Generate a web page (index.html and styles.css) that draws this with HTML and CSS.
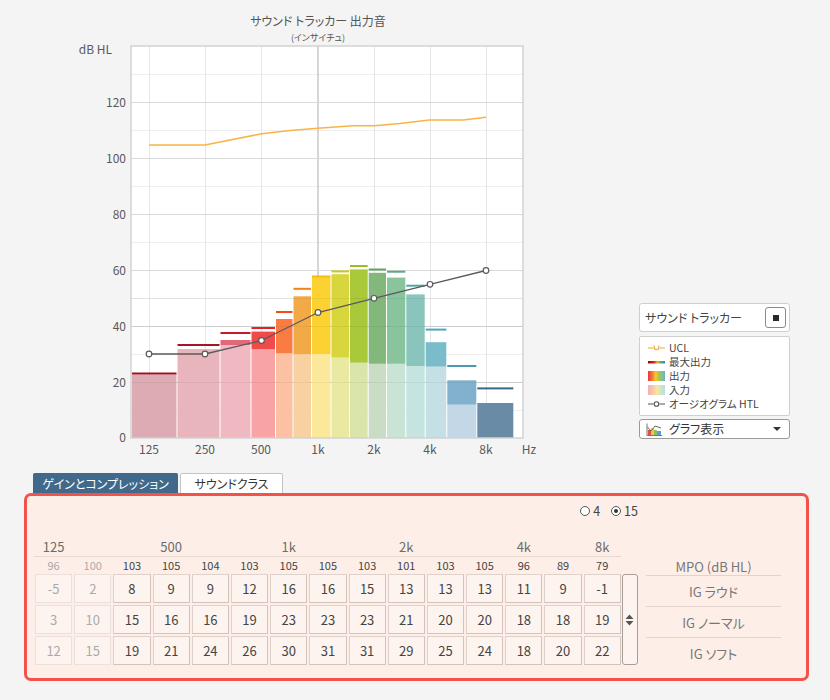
FILE: index.html
```html
<!DOCTYPE html>
<html lang="ja">
<head>
<meta charset="utf-8">
<title>サウンド トラッカー</title>
<link rel="stylesheet" href="styles.css">
</head>
<body>
<div class="page">
  <div class="top">
    <svg class="chart" width="560" height="473" viewBox="0 0 560 473">
      <text class="title" x="318" y="26" text-anchor="middle">サウンド トラッカー 出力音</text>
      <text class="subtitle" x="318" y="41" text-anchor="middle">(インサイチュ)</text>
      <rect x="131" y="46" width="392" height="392" fill="#ffffff"/>
      <g stroke="#efefef" stroke-width="1">
        <line x1="131" y1="74.5" x2="523" y2="74.5"/>
        <line x1="131" y1="130.5" x2="523" y2="130.5"/>
        <line x1="131" y1="186.5" x2="523" y2="186.5"/>
        <line x1="131" y1="242.5" x2="523" y2="242.5"/>
        <line x1="131" y1="298.5" x2="523" y2="298.5"/>
        <line x1="131" y1="354.5" x2="523" y2="354.5"/>
        <line x1="131" y1="410.5" x2="523" y2="410.5"/>
      </g>
      <g stroke="#e6e6e6" stroke-width="1">
        <line x1="149.5" y1="46" x2="149.5" y2="438"/>
        <line x1="205.5" y1="46" x2="205.5" y2="438"/>
        <line x1="261.5" y1="46" x2="261.5" y2="438"/>
        <line x1="374.5" y1="46" x2="374.5" y2="438"/>
        <line x1="430.5" y1="46" x2="430.5" y2="438"/>
        <line x1="486.5" y1="46" x2="486.5" y2="438"/>
      </g>
      <line x1="318" y1="46" x2="318" y2="438" stroke="#c8c8c8" stroke-width="1.5"/>
      <g stroke="#d9d9d9" stroke-width="1">
        <line x1="131" y1="102.5" x2="523" y2="102.5"/>
        <line x1="131" y1="158.5" x2="523" y2="158.5"/>
        <line x1="131" y1="214.5" x2="523" y2="214.5"/>
        <line x1="131" y1="270.5" x2="523" y2="270.5"/>
        <line x1="131" y1="326.5" x2="523" y2="326.5"/>
        <line x1="131" y1="382.5" x2="523" y2="382.5"/>
      </g>
      <g>
        <rect x="132" y="374.5" width="44.5" height="63.5" fill="#dcabb3"/>
        <rect x="177.5" y="349" width="42" height="89" fill="#e8b5bd"/>
        <rect x="220.5" y="345" width="30" height="93" fill="#f0b9c1"/>
        <rect x="251.5" y="349.2" width="23.5" height="88.8" fill="#f8a4a4"/>
        <rect x="276" y="353.4" width="16.5" height="84.6" fill="#fcc1a2"/>
        <rect x="293.5" y="354.3" width="17.5" height="83.7" fill="#f8d1a2"/>
        <rect x="312" y="354" width="18.5" height="84" fill="#fce89a"/>
        <rect x="331.5" y="357.6" width="17.5" height="80.4" fill="#e9e9a2"/>
        <rect x="350" y="362.7" width="17.7" height="75.3" fill="#d9e5aa"/>
        <rect x="368.7" y="363.8" width="17.3" height="74.2" fill="#c9ddc5"/>
        <rect x="387" y="363.8" width="18.3" height="74.2" fill="#c9e3d4"/>
        <rect x="406.3" y="366" width="18.4" height="72" fill="#c5e4e0"/>
        <rect x="425.7" y="366.6" width="20.6" height="71.4" fill="#c5e0e5"/>
        <rect x="447.3" y="404.7" width="29" height="33.3" fill="#c3d7e7"/>
        <rect x="477.3" y="403" width="36" height="35" fill="#6a8ba5"/>
      </g>
      <g>
        <rect x="220.5" y="340" width="30" height="5" fill="#e2697a"/>
        <rect x="251.5" y="331.6" width="23.5" height="17.6" fill="#f04a4a"/>
        <rect x="276" y="319" width="16.5" height="34.4" fill="#fa7c42"/>
        <rect x="293.5" y="296.3" width="17.5" height="58" fill="#f2aa46"/>
        <rect x="312" y="277" width="18.5" height="77" fill="#fcd232"/>
        <rect x="331.5" y="274.2" width="17.5" height="83.4" fill="#d7d63c"/>
        <rect x="350" y="269.4" width="17.7" height="93.3" fill="#a9c83a"/>
        <rect x="368.7" y="272.8" width="17.3" height="91" fill="#82b97a"/>
        <rect x="387" y="277.6" width="18.3" height="86.2" fill="#89c49d"/>
        <rect x="406.3" y="294.4" width="18.4" height="71.6" fill="#89c5bd"/>
        <rect x="425.7" y="342.2" width="20.6" height="24.4" fill="#7abcc9"/>
        <rect x="447.3" y="380.3" width="29" height="24.4" fill="#81b1cd"/>
      </g>
      <g>
        <rect x="132" y="372.5" width="44.5" height="2" fill="#a3101e"/>
        <rect x="177.5" y="344" width="42" height="2" fill="#a81422"/>
        <rect x="220.5" y="332" width="30" height="2" fill="#c8182a"/>
        <rect x="251.5" y="327" width="23.5" height="2" fill="#e42222"/>
        <rect x="276" y="311" width="16.5" height="2" fill="#f44a14"/>
        <rect x="293.5" y="287.8" width="17.5" height="2" fill="#f28214"/>
        <rect x="312" y="275.5" width="18.5" height="2" fill="#f2bc14"/>
        <rect x="331.5" y="270.4" width="17.5" height="2" fill="#c8c824"/>
        <rect x="350" y="265" width="17.7" height="2" fill="#96c020"/>
        <rect x="368.7" y="268.5" width="17.3" height="2" fill="#5fa85e"/>
        <rect x="387" y="270.7" width="18.3" height="2" fill="#5ca883"/>
        <rect x="406.3" y="284.7" width="18.4" height="2" fill="#4fa8a2"/>
        <rect x="425.7" y="328.6" width="20.6" height="2" fill="#4ea6bc"/>
        <rect x="447.3" y="365" width="29" height="2" fill="#4c96b6"/>
        <rect x="477.3" y="387.4" width="36" height="2" fill="#3a6888"/>
      </g>
      <g stroke="rgba(0,0,0,0.05)" stroke-width="1">
        <line x1="131" y1="326.5" x2="523" y2="326.5"/>
        <line x1="131" y1="382.5" x2="523" y2="382.5"/>
        <line x1="131" y1="298.5" x2="523" y2="298.5"/>
      </g>
      <polyline fill="none" stroke="#f8b447" stroke-width="1.6" points="149,145 205,145 261.7,133.7 290,130.5 317.7,128.3 352.7,125.7 374.3,125.7 400,123.5 429.3,120 463.3,120 486,117.3"/>
      <polyline fill="none" stroke="#5a5a5a" stroke-width="1.3" points="149,354 205,354 261.5,340.5 318,312.5 374,298.3 430,284.3 486,270.5"/>
      <g fill="#ffffff" stroke="#5a5a5a" stroke-width="1.2">
        <circle cx="149" cy="354" r="2.8"/>
        <circle cx="205" cy="354" r="2.8"/>
        <circle cx="261.5" cy="340.5" r="2.8"/>
        <circle cx="318" cy="312.5" r="2.8"/>
        <circle cx="374" cy="298.3" r="2.8"/>
        <circle cx="430" cy="284.3" r="2.8"/>
        <circle cx="486" cy="270.5" r="2.8"/>
      </g>
      <rect x="131" y="46" width="392" height="392" fill="none" stroke="#d2d2d2" stroke-width="1.5"/>
      <g class="axis">
        <text x="112" y="54" text-anchor="end">dB HL</text>
        <text x="126" y="107" text-anchor="end">120</text>
        <text x="126" y="163" text-anchor="end">100</text>
        <text x="126" y="219" text-anchor="end">80</text>
        <text x="126" y="275" text-anchor="end">60</text>
        <text x="126" y="331" text-anchor="end">40</text>
        <text x="126" y="387" text-anchor="end">20</text>
        <text x="126" y="442" text-anchor="end">0</text>
        <text x="149" y="454" text-anchor="middle">125</text>
        <text x="205" y="454" text-anchor="middle">250</text>
        <text x="261" y="454" text-anchor="middle">500</text>
        <text x="318" y="454" text-anchor="middle">1k</text>
        <text x="374" y="454" text-anchor="middle">2k</text>
        <text x="430" y="454" text-anchor="middle">4k</text>
        <text x="486" y="454" text-anchor="middle">8k</text>
        <text x="529" y="454" text-anchor="middle">Hz</text>
      </g>
    </svg>
    <aside class="side">
      <div class="tracker">
        <span class="tracker-label">サウンド トラッカー</span>
        <span class="stop"><span class="stop-sq"></span></span>
      </div>
      <div class="legend">
        <div class="li">
          <svg class="lic" width="17" height="10" viewBox="0 0 17 10"><path d="M0 5H5M12 5H17M6.2 2.5V5.5Q8.5 8 10.8 5.5V2.5" fill="none" stroke="#f2a53a" stroke-width="1.2"/></svg>
          <span class="lt">UCL</span>
        </div>
        <div class="li">
          <svg class="lic" width="17" height="10" viewBox="0 0 17 10"><defs><linearGradient id="gmax" x1="0" x2="1" y1="0" y2="0"><stop offset="0" stop-color="#9a0010"/><stop offset="0.35" stop-color="#e02020"/><stop offset="0.55" stop-color="#f0b020"/><stop offset="0.75" stop-color="#60b050"/><stop offset="1" stop-color="#3088c0"/></linearGradient></defs><rect x="0" y="4" width="17" height="2.5" fill="url(#gmax)"/></svg>
          <span class="lt">最大出力</span>
        </div>
        <div class="li">
          <svg class="lic" width="17" height="10" viewBox="0 0 17 10"><defs><linearGradient id="gout" x1="0" x2="1" y1="0" y2="0"><stop offset="0" stop-color="#e83a3a"/><stop offset="0.25" stop-color="#f27a34"/><stop offset="0.45" stop-color="#f8c830"/><stop offset="0.65" stop-color="#a8c840"/><stop offset="0.85" stop-color="#80c0a0"/><stop offset="1" stop-color="#68b0cc"/></linearGradient></defs><rect x="0" y="0" width="17" height="10" fill="url(#gout)"/></svg>
          <span class="lt">出力</span>
        </div>
        <div class="li">
          <svg class="lic" width="17" height="10" viewBox="0 0 17 10"><defs><linearGradient id="gin" x1="0" x2="1" y1="0" y2="0"><stop offset="0" stop-color="#f2b0b6"/><stop offset="0.3" stop-color="#f8caa8"/><stop offset="0.5" stop-color="#f8e4a0"/><stop offset="0.7" stop-color="#d8e8b8"/><stop offset="1" stop-color="#b8dce6"/></linearGradient></defs><rect x="0" y="0" width="17" height="10" fill="url(#gin)"/></svg>
          <span class="lt">入力</span>
        </div>
        <div class="li">
          <svg class="lic" width="17" height="10" viewBox="0 0 17 10"><path d="M0 5H5.5M11.5 5H17" stroke="#555" stroke-width="1.2"/><circle cx="8.5" cy="5" r="2.3" fill="#fff" stroke="#555" stroke-width="1.1"/></svg>
          <span class="lt">オージオグラム HTL</span>
        </div>
      </div>
      <div class="dropdown">
        <svg class="dd-icon" width="16" height="13" viewBox="0 0 16 13"><rect x="2" y="7" width="3" height="5" fill="#e84848"/><rect x="5" y="5" width="3" height="7" fill="#f6c838"/><rect x="8" y="7" width="3" height="5" fill="#8cc060"/><rect x="11" y="8" width="4" height="4" fill="#5aa0d0"/><polyline points="1.5,4 5,8 9,3 15,5" fill="none" stroke="#666" stroke-width="1"/><path d="M1 0.5V12.5H16" fill="none" stroke="#777" stroke-width="1"/></svg>
        <span class="dd-label">グラフ表示</span>
        <span class="caret"></span>
      </div>
    </aside>
  </div>
  <div class="tabs">
    <div class="tab tab-active">ゲインとコンプレッション</div>
    <div class="tab">サウンドクラス</div>
  </div>
  <div class="panel">
    <div class="tblock">
      <div class="radios">
        <span class="radio"></span><span class="rlabel">4</span>
        <span class="radio radio-on"></span><span class="rlabel">15</span>
      </div>
      <div class="freqrow">
        <span>125</span><span></span><span></span><span>500</span><span></span><span></span><span>1k</span><span></span><span></span><span>2k</span><span></span><span></span><span>4k</span><span></span><span>8k</span>
      </div>
      <div class="mporow">
        <span class="fade">96</span><span class="fade">100</span><span>103</span><span>105</span><span>104</span><span>103</span><span>105</span><span>105</span><span>103</span><span>101</span><span>103</span><span>105</span><span>96</span><span>89</span><span>79</span>
      </div>
      <div class="cellwrap">
        <div class="cells">
          <span class="cell fade">-5</span><span class="cell fade">2</span><span class="cell">8</span><span class="cell">9</span><span class="cell">9</span><span class="cell">12</span><span class="cell">16</span><span class="cell">16</span><span class="cell">15</span><span class="cell">13</span><span class="cell">13</span><span class="cell">13</span><span class="cell">11</span><span class="cell">9</span><span class="cell">-1</span>
          <span class="cell fade">3</span><span class="cell fade">10</span><span class="cell">15</span><span class="cell">16</span><span class="cell">16</span><span class="cell">19</span><span class="cell">23</span><span class="cell">23</span><span class="cell">23</span><span class="cell">21</span><span class="cell">20</span><span class="cell">20</span><span class="cell">18</span><span class="cell">18</span><span class="cell">19</span>
          <span class="cell fade">12</span><span class="cell fade">15</span><span class="cell">19</span><span class="cell">21</span><span class="cell">24</span><span class="cell">26</span><span class="cell">30</span><span class="cell">31</span><span class="cell">31</span><span class="cell">29</span><span class="cell">25</span><span class="cell">24</span><span class="cell">18</span><span class="cell">20</span><span class="cell">22</span>
        </div>
        <div class="spinner">
          <svg width="9" height="12" viewBox="0 0 9 12"><path d="M4.5 0.5L8.5 5H0.5Z M4.5 11.5L8.5 7H0.5Z" fill="#555"/></svg>
        </div>
      </div>
    </div>
    <div class="labels">
      <div class="lab lab-head">MPO (dB HL)</div>
      <div class="lab">IG ラウド</div>
      <div class="lab">IG ノーマル</div>
      <div class="lab lab-last">IG ソフト</div>
    </div>
  </div>
</div>
</body>
</html>
```

FILE: styles.css
```css
* { box-sizing: border-box; }
html, body { margin: 0; padding: 0; }
body {
  background: #f4f4f4;
  font-family: "Noto Sans CJK JP", "Noto Sans", sans-serif;
  font-feature-settings: "palt" 1;
  color: #444;
  font-size: 12px;
}
.page { width: 830px; height: 700px; overflow: hidden; }

.top { display: flex; height: 473px; }
.chart { display: block; flex: none; }
.chart text { font-family: "Noto Sans CJK JP", "Noto Sans", sans-serif; font-feature-settings: "palt" 1; fill: #555; }
.chart .title { font-size: 12px; fill: #555; }
.chart .subtitle { font-size: 9px; fill: #555; }
.chart .axis text { font-size: 12px; fill: #5a5a5a; }

.side { margin-left: 79px; padding-top: 303px; width: 151px; flex: none; }
.tracker {
  height: 29px; background: #fff; border: 1px solid #cfcfcf; border-radius: 3px;
  display: flex; align-items: center; justify-content: space-between; padding: 0 3px 0 5px;
}
.tracker-label { font-size: 12px; color: #444; line-height: 1; white-space: nowrap; }
.stop {
  width: 21px; height: 21px; border: 1px solid #8a8a8a; border-radius: 3px; background: #fff;
  display: flex; align-items: center; justify-content: center;
}
.stop-sq { width: 6px; height: 6px; background: #2a2a2a; }
.legend {
  margin-top: 4px; height: 80px; background: #fff; border: 1px solid #cfcfcf; border-radius: 2px;
  padding: 4px 0 0 8px;
}
.li { height: 14px; display: flex; align-items: center; }
.lt { font-size: 10.5px; color: #444; line-height: 12px; white-space: nowrap; }
.lic { display: block; margin-right: 4px; flex: none; }
.dropdown {
  margin-top: 3px; height: 20px; background: #fff; border: 1px solid #9a9a9a; border-radius: 3px;
  display: flex; align-items: center; padding: 0 8px 0 6px;
}
.dd-icon { display: block; flex: none; margin-right: 7px; }
.dd-label { font-size: 12px; color: #333; line-height: 1; flex: 1; white-space: nowrap; }
.caret { width: 0; height: 0; border-left: 4px solid transparent; border-right: 4px solid transparent; border-top: 4px solid #333; }

.tabs { display: flex; gap: 2px; margin-left: 33px; height: 20px; align-items: flex-end; }
.tab {
  height: 20px; width: 103px; background: #fff; border: 1px solid #c4c4c4; border-bottom: none;
  border-radius: 2px 2px 0 0; font-size: 12px; color: #333; display: flex; align-items: center; justify-content: center;
  line-height: 1; white-space: nowrap;
}
.tab-active { width: 145px; background: #41698b; border-color: #41698b; color: #fff; }

.panel {
  margin-left: 24px; width: 785px; height: 188px;
  background: #fdefe8; border: 3px solid #f2524a; border-radius: 7px;
  display: flex; align-items: flex-start; padding: 5px 0 0 7px;
}
.tblock { width: 604px; flex: none; }
.radios { height: 20px; display: flex; align-items: center; justify-content: flex-end; }
.radio { width: 10px; height: 10px; border: 1px solid #555; border-radius: 50%; display: flex; align-items: center; justify-content: center; background: #fff; }
.radio-on::after { content: ""; width: 4px; height: 4px; border-radius: 50%; background: #333; }
.rlabel { font-size: 12.5px; color: #444; margin-left: 3px; margin-right: 11px; line-height: 1; }
.rlabel:last-child { margin-right: 0; }

.freqrow, .mporow, .cells {
  display: grid; grid-template-columns: repeat(15, 37.2px); column-gap: 2px;
}
.freqrow {
  margin-top: 17px; height: 19px; width: 587px; border-bottom: 1px solid #e8d8d0;
  padding-left: 1px; font-size: 13px; color: #6c6c6c;
}
.freqrow span, .mporow span { text-align: center; line-height: 17px; }
.mporow { height: 16px; padding-left: 1px; font-size: 11px; color: #444; }
.mporow .fade { color: #aaa; }
.cellwrap { display: flex; margin-top: 1px; padding-left: 1px; }
.cells { grid-template-rows: repeat(3, 29px); row-gap: 2px; }
.cell {
  background: #fdf4ef; border: 1px solid #d3c3ba; border-top-color: #e0d2ca; border-left-color: #e0d2ca;
  font-size: 13px; color: #444; display: flex; align-items: center; justify-content: center; line-height: 1;
}
.cell.fade { color: #aaa; border-color: #ece0da; }
.spinner {
  margin-left: 1px; width: 16px; height: 91px; background: #fdf4ef;
  border: 1px solid #a89e98; border-radius: 3px; display: flex; align-items: center; justify-content: center;
}
.spinner svg { display: block; }

.labels { margin-left: 8px; margin-top: 56px; width: 135px; flex: none; }
.lab {
  height: 31px; border-bottom: 1px solid #e2d4cc; font-size: 13px; color: #777;
  display: flex; align-items: center; justify-content: center; line-height: 1; white-space: nowrap;
}
.lab-head { height: 19px; align-items: flex-start; padding-top: 3px; }
.lab-last { border-bottom: none; }
```
